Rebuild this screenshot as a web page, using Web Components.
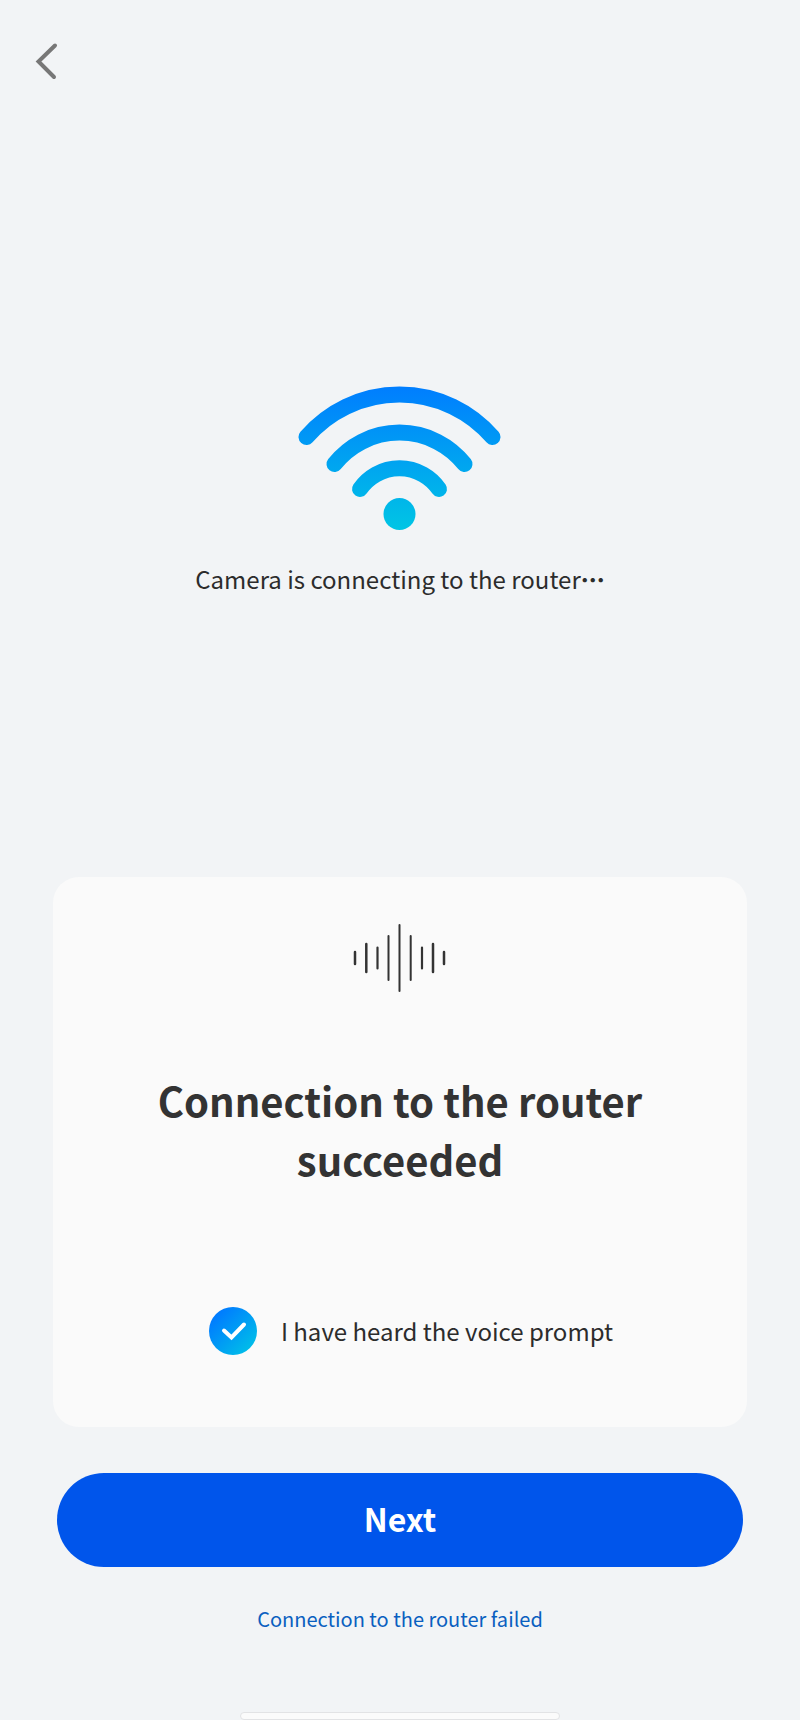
<!DOCTYPE html>
<html lang="en">
<head>
<meta charset="utf-8">
<meta name="viewport" content="width=device-width, initial-scale=1">
<title>Camera setup</title>
<style>
    body {
        margin: 0;
        background: #f2f4f6;
        color: #2c2c2c;
        font-family: "Noto Sans CJK SC", sans-serif;
    }
</style>
</head>
<body>
<setup-page>
    <back-button slot="header"></back-button>
    <wifi-status>Camera is connecting to the router</wifi-status>
    <voice-card slot="bottom">
        Connection to the router succeeded
        <check-option slot="option">I have heard the voice prompt</check-option>
    </voice-card>
    <setup-actions slot="bottom">
        Next
        <span slot="failed">Connection to the router failed</span>
    </setup-actions>
</setup-page>

<script>
class BaseElement extends HTMLElement
{
    constructor(){
        super();
        this.attachShadow({mode:"open"});
    }

    render(){
        let template = document.createElement("template");
        template.innerHTML = this.getStyles() + this.getTemplate();
        this.shadowRoot.replaceChildren(template.content.cloneNode(true));
    }

    connectedCallback(){
        this.render();
    }
}

class SetupPage extends BaseElement
{
    getTemplate(){
        return `
        <header><slot name="header"></slot></header>
        <main><slot></slot></main>
        <footer>
            <slot name="bottom"></slot>
            <div class="home-bar"></div>
        </footer>
        `;
    }

    getStyles(){
        return `
        <style>
            :host {
                display: flex;
                flex-direction: column;
                min-height: 100vh;
            }
            header {
                padding: 36px 28px 16px;
            }
            main {
                flex: 1;
                display: flex;
                align-items: center;
                justify-content: center;
            }
            footer {
                display: flex;
                flex-direction: column;
                padding: 0 53px;
            }
            .home-bar {
                align-self: center;
                box-sizing: border-box;
                width: 46%;
                height: 8px;
                border: 1px solid #e2e3e5;
                border-radius: 4px;
                background: #fbfbfb;
            }
        </style>
        `;
    }
}

class BackButton extends BaseElement
{
    getTemplate(){
        return `
        <button type="button" aria-label="Back">
            <svg width="36" height="50" viewBox="0 0 36 50" aria-hidden="true">
                <path d="M27 9.500 L10.500 25.500 L26 41"/>
            </svg>
        </button>
        `;
    }

    getStyles(){
        return `
        <style>
            :host {
                display: flex;
            }
            button {
                display: flex;
                padding: 0;
                border: 0;
                background: none;
                cursor: pointer;
            }
            path {
                fill: none;
                stroke: #777;
                stroke-width: 4;
                stroke-linecap: round;
            }
        </style>
        `;
    }
}

class WifiStatus extends BaseElement
{
    getTemplate(){
        return `
        <svg width="204" height="146" viewBox="0 0 204 146" aria-hidden="true">
            <defs>
                <linearGradient id="signal" gradientUnits="userSpaceOnUse" x1="0" y1="0" x2="0" y2="146">
                    <stop offset="0" stop-color="#007dff"/>
                    <stop offset="1" stop-color="#00c6e4"/>
                </linearGradient>
            </defs>
            <g fill="none" stroke="url(#signal)" stroke-width="16" stroke-linecap="round">
                <path d="M8.500 52 A123 123 0 0 1 194.500 52"/>
                <path d="M36.500 79 A83 83 0 0 1 166.500 79"/>
                <path d="M62 104 A48 48 0 0 1 141 104"/>
            </g>
            <circle cx="101.500" cy="129" r="16" fill="url(#signal)"/>
        </svg>
        <p><slot></slot><span class="dots" lang="zh-CN">…</span></p>
        `;
    }

    getStyles(){
        return `
        <style>
            :host {
                display: flex;
                flex-direction: column;
                align-items: center;
                gap: 32px;
            }
            p {
                margin: 0;
                font-size: 24px;
                line-height: 32px;
                text-align: center;
            }
            .dots {
                font-weight: 900;
            }
        </style>
        `;
    }
}

class VoiceCard extends BaseElement
{
    getTemplate(){
        return `
        <svg width="96" height="72" viewBox="0 0 96 72" aria-hidden="true">
            <g stroke="#333" stroke-linecap="round">
                <path stroke-width="2.500" d="M3 31V43 M92 31V43"/>
                <path stroke-width="2.500" d="M14.300 23V51 M81 23V51"/>
                <path stroke-width="2.200" d="M25.500 26.500V47.500 M70 26.500V47.500"/>
                <path stroke-width="2" d="M36.500 15V59 M58.700 15V59"/>
                <path stroke-width="2" d="M47.500 4V70"/>
            </g>
        </svg>
        <h1><slot></slot></h1>
        <slot name="option"></slot>
        `;
    }

    getStyles(){
        return `
        <style>
            :host {
                display: flex;
                flex-direction: column;
                align-items: center;
                padding: 44px 64px 72px;
                border-radius: 26px;
                background: #fafafa;
            }
            h1 {
                max-width: 520px;
                margin: 78px 0 118px;
                font-size: 40px;
                line-height: 59px;
                font-weight: 700;
                text-align: center;
                color: #333;
            }
        </style>
        `;
    }
}

class CheckOption extends BaseElement
{
    getTemplate(){
        return `
        <label>
            <span class="box">
                <input type="checkbox" checked>
                <svg width="48" height="48" viewBox="0 0 48 48" aria-hidden="true">
                    <path d="M15 23.500 L22.500 30.500 L35 17.500"/>
                </svg>
            </span>
            <slot></slot>
        </label>
        `;
    }

    getStyles(){
        return `
        <style>
            :host {
                display: block;
                padding-left: 22px;
            }
            label {
                display: flex;
                align-items: center;
                gap: 24px;
                font-size: 24px;
                line-height: 32px;
                cursor: pointer;
            }
            .box {
                display: grid;
            }
            input, svg {
                grid-area: 1 / 1;
            }
            input {
                appearance: none;
                width: 48px;
                height: 48px;
                margin: 0;
                border: 2px solid #b5b8bc;
                border-radius: 50%;
            }
            input:checked {
                border: 0;
                background: linear-gradient(135deg, #007bff 15%, #00c0e8 90%);
            }
            svg {
                pointer-events: none;
                visibility: hidden;
            }
            input:checked + svg {
                visibility: visible;
            }
            path {
                fill: none;
                stroke: #fff;
                stroke-width: 4;
                stroke-linecap: round;
            }
        </style>
        `;
    }
}

class SetupActions extends BaseElement
{
    getTemplate(){
        return `
        <button type="button"><slot></slot></button>
        <a href="#failed"><slot name="failed"></slot></a>
        `;
    }

    getStyles(){
        return `
        <style>
            :host {
                display: flex;
                flex-direction: column;
                align-items: center;
                padding: 46px 4px 77px;
            }
            button {
                width: 100%;
                height: 94px;
                padding: 0 0 4px;
                border: 0;
                border-radius: 47px;
                background: #0055eb;
                color: #fff;
                font-family: inherit;
                font-size: 32px;
                font-weight: 700;
                line-height: 40px;
                cursor: pointer;
            }
            a {
                margin-top: 36px;
                font-size: 20px;
                line-height: 32px;
                color: #0a5fc0;
                text-decoration: none;
            }
        </style>
        `;
    }
}

customElements.define('setup-page',SetupPage);
customElements.define('back-button',BackButton);
customElements.define('wifi-status',WifiStatus);
customElements.define('voice-card',VoiceCard);
customElements.define('check-option',CheckOption);
customElements.define('setup-actions',SetupActions);
</script>
</body>
</html>
